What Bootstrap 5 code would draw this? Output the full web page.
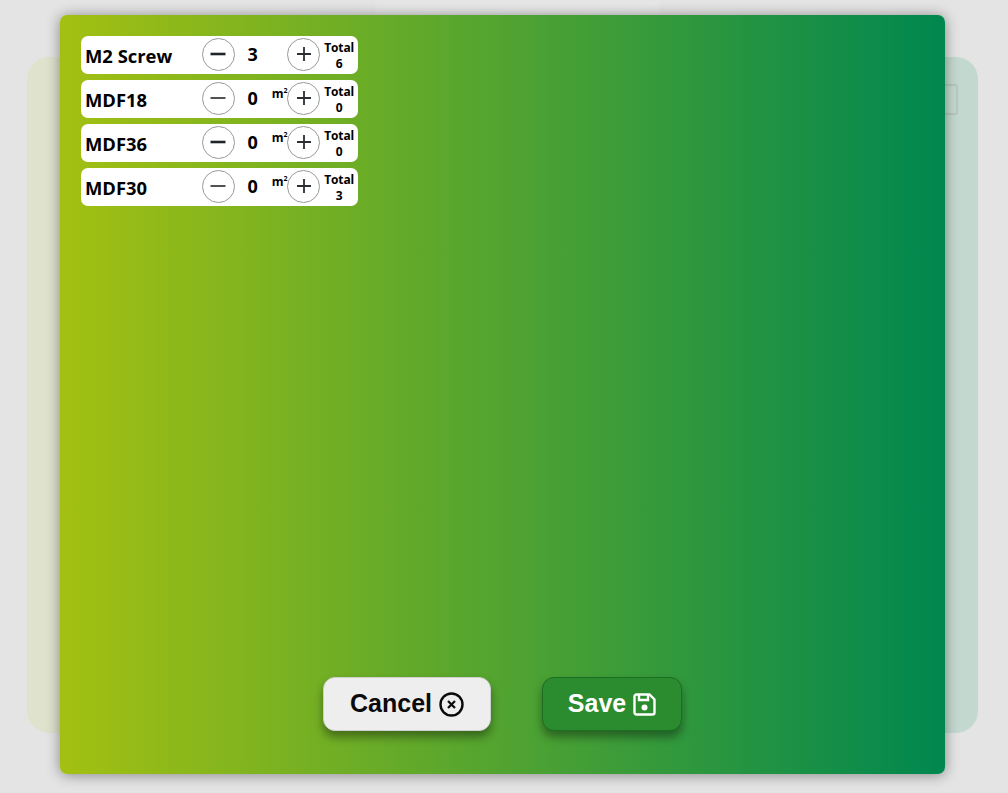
<!DOCTYPE html>
<html lang="en">
<head>
<meta charset="utf-8">
<title>Materials</title>
<link href="https://cdn.jsdelivr.net/npm/bootstrap@5.3.0/dist/css/bootstrap.min.css" rel="stylesheet">
<style>
html,body{height:100%;}
body{background:#e3e4e3;font-family:"Open Sans","Noto Sans",sans-serif;overflow:hidden;}
.stage{position:relative;height:793px;padding:57px 30px 60px 27px;}
.back-panel{height:100%;border-radius:22px;background:linear-gradient(to right,#dfe3cd,#c3d9cf);position:relative;}
.ghost-icon{position:absolute;right:20px;top:27px;width:19px;height:31px;border:2px solid #b9c8c0;border-radius:3px;}
.ghost-top{position:absolute;left:375px;top:0;width:285px;height:15px;background:#e6e7e6;filter:blur(2px);}
.sheet{position:absolute;left:60px;top:15px;width:885px;height:759px;border-radius:7px;background:linear-gradient(to right,#a3c012,#00874f);box-shadow:0 1px 14px rgba(0,0,0,.42);padding:21px;}
.item-list{width:277px;gap:6px;}
.item-row{height:38px;border-radius:7px;background:#fff;color:#000;padding-left:4px;}
.item-name{width:118px;font-size:18.4px;font-weight:700;line-height:1;padding-top:3px;white-space:nowrap;}
.round-btn{width:33px;height:33px;border-radius:50%;border:1px solid #999;background:#fff;padding:0;flex:none;margin-top:-2px;}
.round-btn svg{display:block;margin:auto;}
.qty-cell{width:53px;font-size:18px;font-weight:700;line-height:1;position:relative;z-index:1;text-align:center;margin-top:-3px;padding-right:17px;}
.unit-tag{position:absolute;left:37px;top:-1px;font-size:12px;font-weight:700;line-height:1;}
.unit-tag sup{font-size:7px;top:-.6em;}
.total-cell{width:38px;font-size:12px;font-weight:700;line-height:16px;text-align:center;padding-top:2px;letter-spacing:-.1px;}
.actions{position:absolute;left:263px;top:662px;gap:51px;}
.act-btn{height:54px;border-radius:12px;font-family:"Liberation Sans",Roboto,sans-serif;font-size:25px;font-weight:700;box-shadow:0 6px 10px rgba(0,0,0,.38);padding:0;gap:7px;}
.act-cancel{width:168px;background:#eeeeee;border:1px solid #cfcfcf;color:#0a0a0a;}
.act-save{width:140px;background:#2a8c2e;border:1px solid #1c6e22;color:#fff;}
.act-btn:hover{color:inherit;}
</style>
</head>
<body>
<div class="stage">
  <div class="ghost-top"></div>
  <div class="back-panel"><div class="ghost-icon"></div></div>
  <div class="sheet">
    <div class="item-list d-flex flex-column">
      <div class="item-row d-flex align-items-center">
        <div class="item-name">M2 Screw</div>
        <button class="round-btn" type="button" aria-label="Decrease"><svg width="18" height="18" viewBox="0 0 18 18"><path d="M1.500 9h15" stroke="#212529" stroke-width="2.600"/></svg></button>
        <div class="qty-cell">3</div>
        <button class="round-btn" type="button" aria-label="Increase"><svg width="18" height="18" viewBox="0 0 18 18"><path d="M2 9h14M9 2v14" stroke="#2b2f33" stroke-width="1.800"/></svg></button>
        <div class="total-cell">Total<br>6</div>
      </div>
      <div class="item-row d-flex align-items-center">
        <div class="item-name">MDF18</div>
        <button class="round-btn" type="button" aria-label="Decrease"><svg width="18" height="18" viewBox="0 0 18 18"><path d="M1.500 9h15" stroke="#333" stroke-width="1.700"/></svg></button>
        <div class="qty-cell">0<span class="unit-tag">m<sup>2</sup></span></div>
        <button class="round-btn" type="button" aria-label="Increase"><svg width="18" height="18" viewBox="0 0 18 18"><path d="M2 9h14M9 2v14" stroke="#2b2f33" stroke-width="1.800"/></svg></button>
        <div class="total-cell">Total<br>0</div>
      </div>
      <div class="item-row d-flex align-items-center">
        <div class="item-name">MDF36</div>
        <button class="round-btn" type="button" aria-label="Decrease"><svg width="18" height="18" viewBox="0 0 18 18"><path d="M1.500 9h15" stroke="#212529" stroke-width="2.600"/></svg></button>
        <div class="qty-cell">0<span class="unit-tag">m<sup>2</sup></span></div>
        <button class="round-btn" type="button" aria-label="Increase"><svg width="18" height="18" viewBox="0 0 18 18"><path d="M2 9h14M9 2v14" stroke="#2b2f33" stroke-width="1.800"/></svg></button>
        <div class="total-cell">Total<br>0</div>
      </div>
      <div class="item-row d-flex align-items-center">
        <div class="item-name">MDF30</div>
        <button class="round-btn" type="button" aria-label="Decrease"><svg width="18" height="18" viewBox="0 0 18 18"><path d="M1.500 9h15" stroke="#333" stroke-width="1.700"/></svg></button>
        <div class="qty-cell">0<span class="unit-tag">m<sup>2</sup></span></div>
        <button class="round-btn" type="button" aria-label="Increase"><svg width="18" height="18" viewBox="0 0 18 18"><path d="M2 9h14M9 2v14" stroke="#2b2f33" stroke-width="1.800"/></svg></button>
        <div class="total-cell">Total<br>3</div>
      </div>
    </div>
    <div class="actions d-flex">
      <button class="btn act-btn act-cancel d-flex align-items-center justify-content-center" type="button">Cancel
        <svg width="25" height="25" viewBox="0 0 25 25" fill="none" stroke="#0a0a0a"><circle cx="12.500" cy="12.500" r="11" stroke-width="2.400"/><path d="M9 9l7 7M16 9l-7 7" stroke-width="2.200"/></svg>
      </button>
      <button class="btn act-btn act-save d-flex align-items-center justify-content-center" type="button">Save
        <svg width="23" height="23" viewBox="0 0 23 23" fill="none" stroke="#fff" stroke-width="2.400"><path d="M3.500 1.500h13l5 5v13a2 2 0 0 1-2 2h-16a2 2 0 0 1-2-2v-16a2 2 0 0 1 2-2z"/><path d="M6 1.500v5.500h9V1.500"/><circle cx="11.500" cy="14.500" r="3" fill="#fff" stroke="none"/></svg>
      </button>
    </div>
  </div>
</div>
<script src="https://cdn.jsdelivr.net/npm/bootstrap@5.3.0/dist/js/bootstrap.bundle.min.js"></script>
</body>
</html>
